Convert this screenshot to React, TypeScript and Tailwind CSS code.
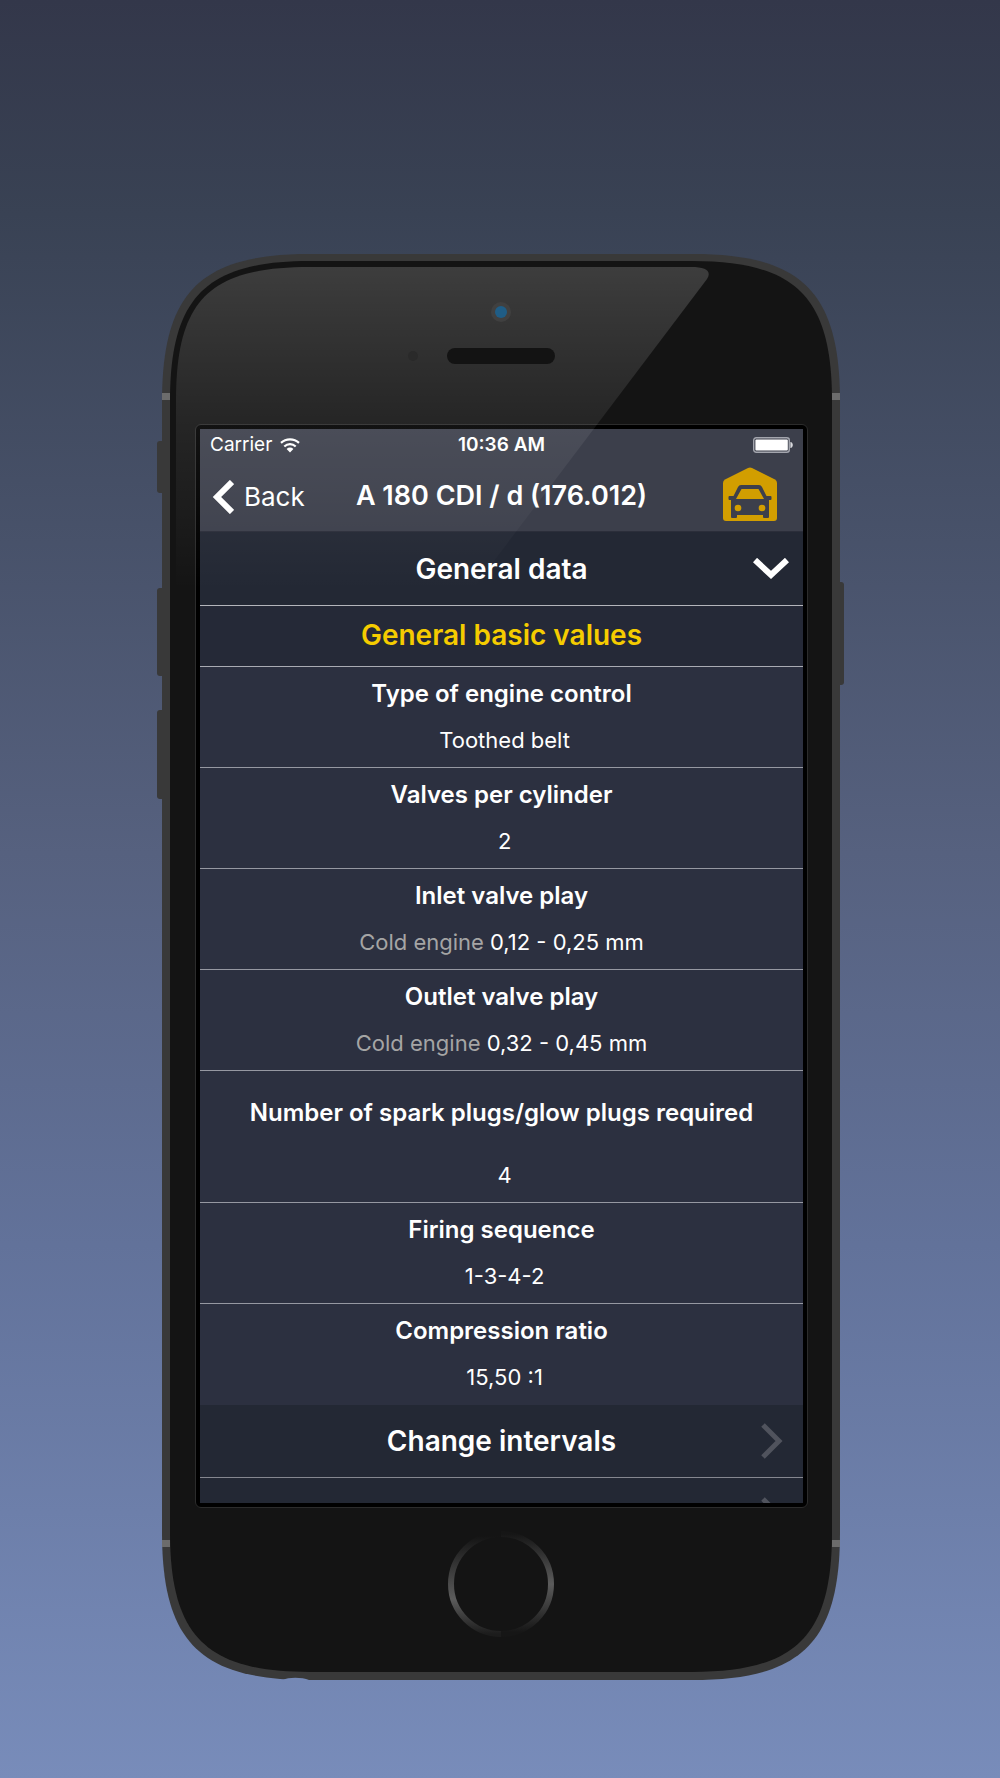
import React from 'react';

interface Spec {
  title: string;
  label?: string;
  value: string;
  tall?: boolean;
}

const specs: Spec[] = [
  { title: 'Type of engine control', value: 'Toothed belt' },
  { title: 'Valves per cylinder', value: '2' },
  { title: 'Inlet valve play', label: 'Cold engine', value: '0,12 - 0,25 mm' },
  { title: 'Outlet valve play', label: 'Cold engine', value: '0,32 - 0,45 mm' },
  { title: 'Number of spark plugs/glow plugs required', value: '4', tall: true },
  { title: 'Firing sequence', value: '1-3-4-2' },
  { title: 'Compression ratio', value: '15,50 :1' },
];

const PhoneShell: React.FC = () => (
  <svg
    className="absolute inset-0 h-full w-full"
    viewBox="0 0 688 1426"
    preserveAspectRatio="none"
    aria-hidden="true"
  >
    <defs>
      <linearGradient id="ringLeft" x1="0" y1="0" x2="0" y2="1">
        <stop offset="0.02" stopColor="#141414" />
        <stop offset="0.65" stopColor="#5c5c5c" />
        <stop offset="1" stopColor="#1c1c1c" />
      </linearGradient>
      <linearGradient id="ringRight" x1="0" y1="0" x2="0" y2="1">
        <stop offset="0" stopColor="#161616" />
        <stop offset="0.5" stopColor="#5c5c5c" />
        <stop offset="0.98" stopColor="#161616" />
      </linearGradient>
    </defs>

    {/* side buttons */}
    <g fill="#393939">
      <rect x="1" y="187" width="12" height="52" rx="3" />
      <rect x="1" y="334" width="12" height="88" rx="3" />
      <rect x="1" y="456" width="12" height="89" rx="3" />
      <rect x="676" y="328" width="12" height="103" rx="3" />
    </g>

    {/* metal rim and front glass */}
    <path
      fill="#393939"
      d="M6 148C6 38 44 0 154 0H536C646 0 684 38 684 148V1278C684 1388 646 1426 536 1426H154C44 1426 6 1388 6 1278Z"
    />
    <path
      fill="#141414"
      d="M14 147C14 43 50 7 154 7H536C640 7 676 43 676 147V1278C676 1382 640 1418 536 1418H154C50 1418 14 1382 14 1278Z"
    />
    <path fill="#7589b6" d="M127 1426C132 1423 146 1423 153 1426Z" />

    {/* antenna bands */}
    <g fill="#6c6c6c">
      <rect x="6" y="139" width="8" height="7" />
      <rect x="676" y="139" width="8" height="7" />
      <rect x="6" y="1286" width="8" height="7" />
      <rect x="676" y="1286" width="8" height="7" />
    </g>

    {/* home button */}
    <path fill="none" stroke="url(#ringLeft)" strokeWidth="6" d="M345 1280A50 50 0 0 0 345 1380" />
    <path fill="none" stroke="url(#ringRight)" strokeWidth="6" d="M345 1280A50 50 0 0 1 345 1380" />
  </svg>
);

const Glare: React.FC = () => (
  <svg
    className="pointer-events-none absolute inset-0 h-full w-full"
    viewBox="0 0 688 1426"
    preserveAspectRatio="none"
    aria-hidden="true"
  >
    <defs>
      <linearGradient id="glare" gradientUnits="userSpaceOnUse" x1="0" y1="13" x2="0" y2="336">
        <stop offset="0" stopColor="#fff" stopOpacity="0.175" />
        <stop offset="0.47" stopColor="#fff" stopOpacity="0.077" />
        <stop offset="1" stopColor="#fff" stopOpacity="0" />
      </linearGradient>
    </defs>
    <path
      fill="url(#glare)"
      d="M20 147C20 46 53 13 154 13H535C550 13 556 17 551 25L548 29L316 336H20Z"
    />
    <circle cx="257" cy="102" r="5" fill="#2a2a2a" />
    <circle cx="345" cy="58" r="10" fill="#404040" />
    <circle cx="345" cy="58" r="6" fill="#1f5d86" />
    <rect x="291" y="94" width="108" height="16" rx="8" fill="#131313" />
  </svg>
);

const Chevron: React.FC<{ className: string; points: string; box: string; width?: number }> = ({
  className,
  points,
  box,
  width = 5,
}) => (
  <svg className={className} viewBox={box} fill="none" stroke="currentColor" aria-hidden="true">
    <polyline points={points} strokeWidth={width} />
  </svg>
);

const StatusBar: React.FC = () => (
  <div className="grid h-[33px] grid-cols-3 items-center px-2.5 text-[19px]">
    <div className="flex items-center gap-2">
      <span>Carrier</span>
      <svg className="mb-0.5 h-4 w-5" viewBox="0 0 20 15" fill="none" stroke="currentColor" aria-hidden="true">
        <path strokeWidth="2.2" d="M1 5.4C6 0.6 14 0.6 19 5.4" />
        <path strokeWidth="2.2" d="M4.3 9C7.6 5.9 12.4 5.9 15.7 9" />
        <path fill="currentColor" stroke="none" d="M6.6 11.4C8.6 9.6 11.4 9.6 13.4 11.4L10 15Z" />
      </svg>
    </div>
    <span className="text-center font-semibold">10:36 AM</span>
    <svg className="mb-0.5 h-4 w-10 justify-self-end" viewBox="0 0 40 16" aria-hidden="true">
      <rect x="0.7" y="0.7" width="35.6" height="14.6" rx="2.5" fill="none" stroke="#a3a5ad" strokeWidth="1.4" />
      <rect x="2.4" y="2.4" width="32.4" height="11.2" rx="1" fill="#fff" />
      <path fill="#d8d9dd" d="M37.4 5C40.6 5.4 40.6 10.6 37.4 11Z" />
    </svg>
  </div>
);

const GarageIcon: React.FC = () => (
  <svg className="h-[54px] w-[54px]" viewBox="0 0 54 54" aria-hidden="true">
    <path
      fill="#d29e00"
      d="M25 1Q27 0 29 1L52 12.500Q54 13.500 54 16V51Q54 54 51 54H3Q0 54 0 51V16Q0 13.500 2 12.500Z"
    />
    <path
      fill="#3c3f4b"
      fillRule="evenodd"
      d="M18 18H36Q38 18 39 20L43.500 29H47.500Q48.500 29 48.500 30V32Q48.500 33 47.500 33H46V50Q46 51 45 51H41Q40 51 40 50V48H14V50Q14 51 13 51H9Q8 51 8 50V33H6.500Q5.500 33 5.500 32V30Q5.500 29 6.500 29H10.500L15 20Q16 18 18 18ZM18.500 22L13 32H41L35.500 22Z"
    />
    <circle cx="15" cy="41" r="3.300" fill="#d29e00" />
    <circle cx="39" cy="41" r="3.300" fill="#d29e00" />
  </svg>
);

const SpecRow: React.FC<{ spec: Spec; last: boolean }> = ({ spec, last }) => (
  <div className={last ? 'pb-[7px]' : 'border-b border-[#9698a2] pb-1.5'}>
    <dt
      className={
        spec.tall
          ? 'text-[24px] leading-[84px] font-semibold'
          : 'text-[24px] leading-[53px] font-semibold'
      }
    >
      {spec.title}
    </dt>
    <dd className="text-[22px] leading-[41px] whitespace-pre">
      <span className="text-[#a5a5a5]">{spec.label}</span> {spec.value}
    </dd>
  </div>
);

export default function App() {
  return (
    <main className="min-h-screen bg-[linear-gradient(#33374a,#394254_12%,#56617f_48%,#62729a_70%,#788cba)] pt-[254px] pb-[98px] font-['Inter',sans-serif] text-white">
      <div className="relative mx-auto max-w-[688px] pt-[170px] pr-9 pb-[172px] pl-[39px]">
        <PhoneShell />

        <div className="relative rounded-md border border-[#2c2c2c] bg-black p-1">
          <div className="aspect-[603/1074] overflow-hidden bg-[#232834]">
            <header className="border-b border-[#2b2e3a] bg-[#3c3f4b]">
              <StatusBar />
              <div className="grid h-[69px] grid-cols-[1fr_auto_1fr] items-center px-3">
                <button type="button" className="flex items-center gap-2.5 text-[26px]">
                  <Chevron className="h-[34px] w-[22px]" box="0 0 22 34" points="20,2 5,17 20,32" width={6} />
                  Back
                </button>
                <h1 className="text-[27px] font-semibold">A 180 CDI / d (176.012)</h1>
                <button type="button" aria-label="Garage" className="justify-self-end pr-3.5 pb-1.5">
                  <GarageIcon />
                </button>
              </div>
            </header>

            <button
              type="button"
              className="grid h-[74px] w-full grid-cols-[1fr_auto_1fr] items-center border-b border-[#b4b5bb] px-3.5 text-[28px] leading-9 font-semibold"
            >
              <span className="col-start-2">General data</span>
              <Chevron className="h-[22px] w-9 justify-self-end" box="0 0 36 22" points="2,2 18,17 34,2" width={6} />
            </button>

            <h2 className="h-[61px] border-b border-[#a9abb3] bg-[#252937] text-center text-[28px] leading-[58px] font-semibold text-[#f5cc00]">
              General basic values
            </h2>

            <dl className="bg-[#2c3040] text-center">
              {specs.map((spec, i) => (
                <SpecRow key={spec.title} spec={spec} last={i === specs.length - 1} />
              ))}
            </dl>

            <button
              type="button"
              className="grid h-[73px] w-full grid-cols-[1fr_auto_1fr] items-center border-b border-[#85878f] px-5 text-[28px] leading-9 font-semibold"
            >
              <span className="col-start-2">Change intervals</span>
              <Chevron
                className="h-9 w-[22px] justify-self-end text-[#50535d]"
                box="0 0 22 36"
                points="2,2 18,18 2,34"
              />
            </button>
            <div className="flex h-[73px] items-center justify-end px-5">
              <Chevron className="h-9 w-[22px] text-[#50535d]" box="0 0 22 36" points="2,2 18,18 2,34" />
            </div>
          </div>
        </div>

        <Glare />
      </div>
    </main>
  );
}
